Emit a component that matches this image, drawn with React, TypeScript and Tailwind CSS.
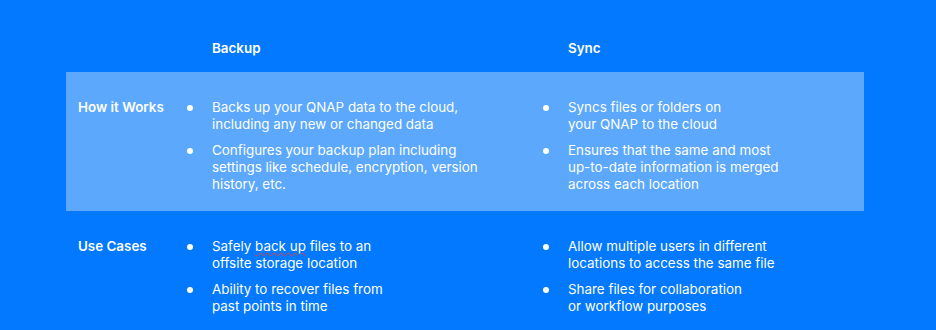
import React from 'react';

type Row = {
  label: string;
  backup: string[][];
  sync: string[][];
  highlight?: boolean;
};

const rows: Row[] = [
  {
    label: 'How it Works',
    highlight: true,
    backup: [
      ['Backs up your QNAP data to the cloud,', 'including any new or changed data'],
      ['Configures your backup plan including', 'settings like schedule, encryption, version', 'history, etc.'],
    ],
    sync: [
      ['Syncs files or folders on', 'your QNAP to the cloud'],
      ['Ensures that the same and most', 'up-to-date information is merged', 'across each location'],
    ],
  },
  {
    label: 'Use Cases',
    backup: [
      ['Safely back up files to an', 'offsite storage location'],
      ['Ability to recover files from', 'past points in time'],
    ],
    sync: [
      ['Allow multiple users in different', 'locations to access the same file'],
      ['Share files for collaboration', 'or workflow purposes'],
    ],
  },
];

const Line: React.FC<{ text: string }> = ({ text }) => {
  if (text.startsWith('Safely back up')) {
    return (
      <span className="block">
        Safely{' '}
        <span className="underline decoration-wavy decoration-[#e0413a] decoration-1 underline-offset-[1px]">back up</span>{' '}
        files to an
      </span>
    );
  }
  return <span className="block">{text}</span>;
};

const BulletList: React.FC<{ items: string[][] }> = ({ items }) => (
  <ul className="flex flex-col gap-[9px]">
    {items.map((lines, i) => (
      <li key={i} className="flex">
        <span className="w-[28px] shrink-0 pl-[3px] pt-[6px]">
          <span className="block h-[6px] w-[6px] rounded-full bg-white" />
        </span>
        <span>
          {lines.map((l, j) => (
            <Line key={j} text={l} />
          ))}
        </span>
      </li>
    ))}
  </ul>
);

export default function App() {
  return (
    <div
      className="h-[330px] w-[936px] bg-[#0279fe] text-white text-[13.4px] leading-[17px]"
      style={{ fontFamily: 'Inter, "Noto Sans", sans-serif' }}
    >
      <div className="mx-[66px] w-[798px]">
        <div className="grid h-[72px] grid-cols-[118px_356px_1fr] pt-[40px] font-semibold">
          <div />
          <div className="pl-[28px]">Backup</div>
          <div className="pl-[28px]">Sync</div>
        </div>
        {rows.map((row) => (
          <div
            key={row.label}
            className={
              row.highlight
                ? 'grid grid-cols-[106px_356px_1fr] bg-[#5ba8fd] pt-[27px] pb-[18px] pl-3'
                : 'grid grid-cols-[106px_356px_1fr] pt-[27px] pl-3'
            }
          >
            <div className="font-semibold">{row.label}</div>
            <BulletList items={row.backup} />
            <BulletList items={row.sync} />
          </div>
        ))}
      </div>
    </div>
  );
}
